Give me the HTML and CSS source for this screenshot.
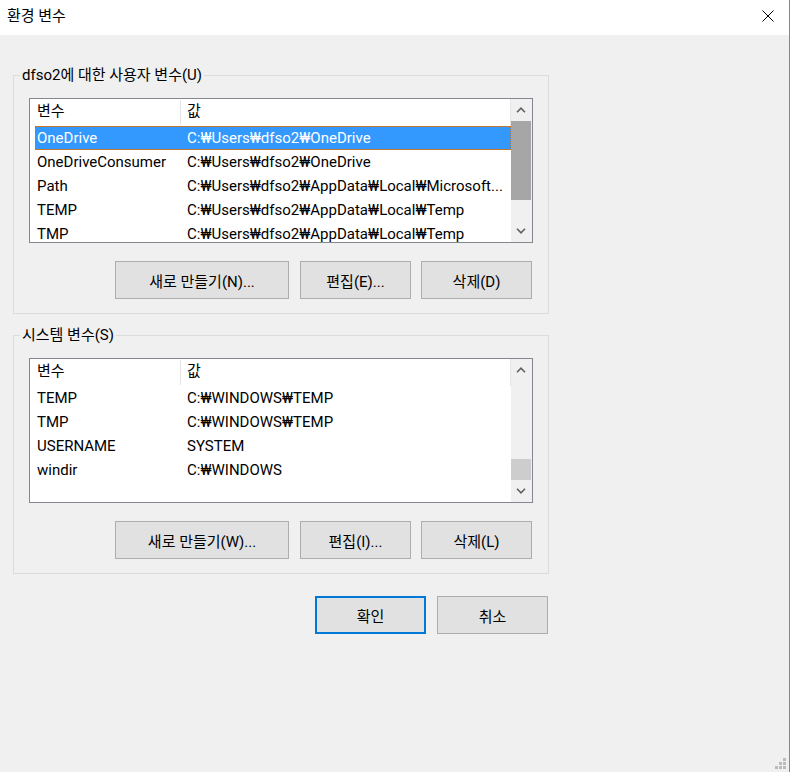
FILE: index.html
```html
<!DOCTYPE html>
<html lang="ko">
<head>
<meta charset="utf-8">
<title>환경 변수</title>
<link rel="stylesheet" href="styles.css">
</head>
<body>
<div class="window">
  <div class="titlebar">
    <span class="title">환경 변수</span>
    <span class="close">
      <svg width="12" height="12" viewBox="0 0 12 12"><path d="M0.5 0.5 L11.5 11.5 M11.5 0.5 L0.5 11.5" stroke="#000" stroke-width="1" fill="none"/></svg>
    </span>
  </div>
  <div class="content">
    <fieldset class="group">
      <legend>dfso2에 대한 사용자 변수(U)</legend>
      <div class="listview">
        <div class="lv-main">
          <div class="lv-header"><span class="hc1">변수</span><span class="hc2">값</span></div>
          <div class="lv-row selected"><span class="c1">OneDrive</span><span class="c2">C:₩Users₩dfso2₩OneDrive</span></div>
          <div class="lv-row"><span class="c1">OneDriveConsumer</span><span class="c2">C:₩Users₩dfso2₩OneDrive</span></div>
          <div class="lv-row"><span class="c1">Path</span><span class="c2">C:₩Users₩dfso2₩AppData₩Local₩Microsoft...</span></div>
          <div class="lv-row"><span class="c1">TEMP</span><span class="c2">C:₩Users₩dfso2₩AppData₩Local₩Temp</span></div>
          <div class="lv-row"><span class="c1">TMP</span><span class="c2">C:₩Users₩dfso2₩AppData₩Local₩Temp</span></div>
        </div>
        <div class="scrollbar">
          <div class="sb-btn"><svg width="10" height="6" viewBox="0 0 10 6"><path d="M1 5.2 L5 1.2 L9 5.2" stroke="#606060" stroke-width="1.6" fill="none"/></svg></div>
          <div class="sb-track top"><div class="thumb dark"></div></div>
          <div class="sb-btn"><svg width="10" height="6" viewBox="0 0 10 6"><path d="M1 0.8 L5 4.8 L9 0.8" stroke="#606060" stroke-width="1.6" fill="none"/></svg></div>
        </div>
      </div>
      <div class="btn-row">
        <button class="btn wide">새로 만들기(N)...</button>
        <button class="btn">편집(E)...</button>
        <button class="btn">삭제(D)</button>
      </div>
    </fieldset>

    <fieldset class="group second">
      <legend>시스템 변수(S)</legend>
      <div class="listview">
        <div class="lv-main">
          <div class="lv-header"><span class="hc1">변수</span><span class="hc2">값</span></div>
          <div class="lv-row"><span class="c1">TEMP</span><span class="c2">C:₩WINDOWS₩TEMP</span></div>
          <div class="lv-row"><span class="c1">TMP</span><span class="c2">C:₩WINDOWS₩TEMP</span></div>
          <div class="lv-row"><span class="c1">USERNAME</span><span class="c2">SYSTEM</span></div>
          <div class="lv-row"><span class="c1">windir</span><span class="c2">C:₩WINDOWS</span></div>
        </div>
        <div class="scrollbar">
          <div class="sb-btn"><svg width="10" height="6" viewBox="0 0 10 6"><path d="M1 5.2 L5 1.2 L9 5.2" stroke="#606060" stroke-width="1.6" fill="none"/></svg></div>
          <div class="sb-track bottom"><div class="thumb light"></div></div>
          <div class="sb-btn"><svg width="10" height="6" viewBox="0 0 10 6"><path d="M1 0.8 L5 4.8 L9 0.8" stroke="#606060" stroke-width="1.6" fill="none"/></svg></div>
        </div>
      </div>
      <div class="btn-row">
        <button class="btn wide">새로 만들기(W)...</button>
        <button class="btn">편집(I)...</button>
        <button class="btn">삭제(L)</button>
      </div>
    </fieldset>

    <div class="footer">
      <button class="btn default">확인</button>
      <button class="btn">취소</button>
    </div>
  </div>
  <svg class="grip" width="14" height="14" viewBox="0 0 14 14">
    <rect x="9" y="1" width="3" height="3" fill="#bcbcbc"/>
    <rect x="5" y="5" width="3" height="3" fill="#bcbcbc"/>
    <rect x="9" y="5" width="3" height="3" fill="#bcbcbc"/>
    <rect x="1" y="9" width="3" height="3" fill="#bcbcbc"/>
    <rect x="5" y="9" width="3" height="3" fill="#bcbcbc"/>
    <rect x="9" y="9" width="3" height="3" fill="#bcbcbc"/>
  </svg>
</div>
</body>
</html>
```

FILE: styles.css
```css
* { box-sizing: border-box; }
html, body { margin: 0; padding: 0; }
body {
  font-family: Roboto, "Noto Sans CJK KR", sans-serif;
  font-size: 15px;
  color: #000;
  background: #f0f0f0;
}
.window {
  position: relative;
  width: 790px;
  height: 772px;
  background: #f0f0f0;
  border-right: 1px solid #888888;
  overflow: hidden;
}
.titlebar {
  height: 35px;
  background: #fff;
  display: flex;
  align-items: center;
  justify-content: space-between;
  padding: 0 0 3px 7px;
}
.title { font-size: 15px; line-height: 20px; }
.close {
  width: 42px;
  height: 32px;
  display: flex;
  align-items: center;
  justify-content: center;
}
.close svg { display: block; }
.content {
  padding: 30px 0 0 13px;
}
.group {
  width: 536px;
  margin: 0;
  padding: 13px 15px 14px 15px;
  border: 1px solid #dcdcdc;
  min-width: 0;
}
.group.second { margin-top: 11px; }
.group legend {
  padding: 0 2px;
  margin-left: -9px;
  font-size: 15px;
  line-height: 20px;
}
.listview {
  height: 145px;
  border: 1px solid #828790;
  background: #fff;
  display: flex;
  overflow: hidden;
}
.lv-main {
  flex: 1;
  min-width: 0;
  overflow: hidden;
}
.lv-header {
  height: 27px;
  display: flex;
  line-height: 24px;
  border-right: 1px solid #e5e5e5;
}
.hc1 {
  width: 151px;
  padding-left: 7px;
  border-right: 1px solid #e5e5e5;
  margin-top: 1px;
  margin-bottom: 1px;
  line-height: 22px;
}
.hc2 { padding-left: 6px; line-height: 22px; margin-top: 1px; }
.lv-row {
  height: 24px;
  line-height: 24px;
  margin-left: 5px;
  display: flex;
  white-space: nowrap;
}
.lv-row .c1 { width: 145px; padding-left: 2px; flex: none; }
.lv-row .c2 { padding-left: 7px; }
.lv-row.selected {
  background: #3399ff;
  color: #fff;
  outline: 1px dotted #c0762c;
  outline-offset: -1px;
}
.scrollbar {
  width: 21px;
  flex: none;
  background: #f0f0f0;
  display: flex;
  flex-direction: column;
}
.sb-btn {
  height: 22px;
  display: flex;
  align-items: center;
  justify-content: center;
  padding-right: 1px;
}
.sb-btn svg { display: block; }
.sb-track {
  flex: 1;
  display: flex;
  flex-direction: column;
}
.sb-track.top { justify-content: flex-start; }
.sb-track.bottom { justify-content: flex-end; }
.thumb { width: 20px; }
.thumb.dark { height: 79px; background: #a6a6a6; }
.thumb.light { height: 21px; background: #cdcdcd; }
.btn-row {
  margin-top: 18px;
  display: flex;
  justify-content: flex-end;
  gap: 10px;
  padding-right: 1px;
}
.btn {
  font-family: Roboto, "Noto Sans CJK KR", sans-serif;
  font-size: 15px;
  color: #000;
  width: 111px;
  height: 38px;
  background: #e1e1e1;
  border: 1px solid #adadad;
  border-radius: 0;
  padding: 0;
  margin: 0;
}
.btn.wide { width: 174px; margin-right: 1px; }
.btn.default { border: 2px solid #0078d7; }
.footer {
  width: 536px;
  margin-top: 22px;
  display: flex;
  justify-content: flex-end;
  gap: 11px;
  padding-right: 1px;
}
.grip {
  position: absolute;
  right: 1px;
  bottom: 1px;
}
```
